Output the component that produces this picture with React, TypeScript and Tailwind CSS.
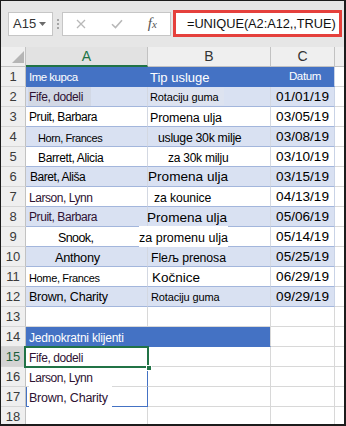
import React from "react";

const LINE = "border-b-[#a3b6dc]";

function RowHead({ n, sel }: { n: number; sel?: boolean }) {
  return (
    <div
      className={
        sel
          ? "w-[25px] shrink-0 h-full flex items-center justify-center border-r border-r-[#c2c2c2] border-b border-b-[#d6d6d6] bg-[#d3d3d3] text-[#1d5e3a] text-[13px] pt-[1px]"
          : "w-[25px] shrink-0 h-full flex items-center justify-center border-r border-r-[#c2c2c2] border-b border-b-[#d6d6d6] bg-[#efefef] text-[#3a3a3a] text-[13px] pt-[1px]"
      }
    >
      {n}
    </div>
  );
}

type T = { t: string; cls: string };

function TRow({
  n,
  band,
  head,
  a,
  b,
  c,
}: {
  n: number;
  band?: boolean;
  head?: boolean;
  a: T;
  b: T;
  c: T;
}) {
  const bg = head ? "bg-[#4472c4]" : band ? "bg-[#d9e1f2]" : "bg-white";
  const line = head ? "border-b-[#4472c4]" : LINE;
  const vr = head ? "border-r-[#4472c4]" : "border-r-[#d3d8e2]";
  return (
    <div className="flex h-[20px]">
      <RowHead n={n} />
      <div className={`w-[122px] shrink-0 ${bg} border-b ${line} border-r ${vr} flex items-center whitespace-nowrap`}>
        <span className={a.cls}>{a.t}</span>
      </div>
      <div className={`w-[123px] shrink-0 ${bg} border-b ${line} border-r ${vr} flex items-center whitespace-nowrap`}>
        <span className={b.cls}>{b.t}</span>
      </div>
      <div className={`w-[64px] shrink-0 ${bg} border-b ${line} border-r border-r-[#c9d3e6] flex items-center justify-end whitespace-nowrap`}>
        <span className={c.cls}>{c.t}</span>
      </div>
      <div className="flex-1 bg-white border-b border-b-[#d8d8d8]" />
    </div>
  );
}

const D = "text-[13.6px] text-black mr-[5px] pt-[1px]";
const P = "text-[#2e1232]";

export default function App() {
  return (
    <div className="w-[346px] h-[426px] overflow-hidden border-t border-l border-r-2 border-b-2 border-[#1c1c1c] bg-white font-['Liberation_Sans',Arial,sans-serif] leading-normal">
      {/* toolbar */}
      <div className="h-[46px] bg-[#e6e6e6] flex items-center pl-[7px] pb-[1px]">
        <div className="w-[45px] h-[24px] bg-white border border-[#c6c6c6] flex items-center justify-between pl-[4px] pr-[6px]">
          <span className="text-[13px] text-[#333]">A15</span>
          <svg width="7" height="4" viewBox="0 0 7 4">
            <polygon points="0,0 7,0 3.5,4" fill="#6b6b6b" />
          </svg>
        </div>
        <div className="w-[9px] flex flex-col items-center gap-[2px]">
          <div className="w-[2px] h-[2px] bg-[#a5a5a5]" />
          <div className="w-[2px] h-[2px] bg-[#a5a5a5]" />
          <div className="w-[2px] h-[2px] bg-[#a5a5a5]" />
        </div>
        <div className="w-[109px] h-[24px] bg-white border border-[#c6c6c6] flex items-center">
          <div className="w-[36px] flex justify-center">
            <svg width="10" height="10" viewBox="0 0 10 10">
              <path d="M1 1 L9 9 M9 1 L1 9" stroke="#b8b8b8" strokeWidth="1.3" fill="none" />
            </svg>
          </div>
          <div className="w-[37px] flex justify-center">
            <svg width="12" height="10" viewBox="0 0 12 10">
              <path d="M1 5.2 L4.5 8.6 L11 1.2" stroke="#b8b8b8" strokeWidth="1.6" fill="none" />
            </svg>
          </div>
          <div className="w-[36px] flex justify-center">
            <span className="italic font-['Liberation_Serif',serif] text-[15px] text-[#555] leading-none">
              f<span className="text-[11px]">x</span>
            </span>
          </div>
        </div>
        <div className="ml-[2px] w-[169px] h-[27px] bg-white border-[3px] border-[#e5403c] flex items-center pl-[11px]">
          <span className="text-[12.8px] text-[#111] tracking-[-0.05px]">=UNIQUE(A2:A12,,TRUE)</span>
        </div>
      </div>

      {/* column header */}
      <div className="flex h-[20px]">
        <div className="w-[25px] shrink-0 bg-[#efefef] border-r border-b border-[#c2c2c2] flex items-end justify-end pr-[1px] pb-[3px]">
          <svg width="12" height="12" viewBox="0 0 12 12">
            <polygon points="12,0 12,12 0,12" fill="#b5b5b5" />
          </svg>
        </div>
        <div className="w-[122px] shrink-0 bg-[#e2e2e2] border-r border-r-[#c2c2c2] border-b-2 border-b-[#217346] flex items-center justify-center text-[14px] text-[#217346] pt-[1px]">
          A
        </div>
        <div className="w-[123px] shrink-0 bg-[#efefef] border-r border-b border-[#c2c2c2] flex items-center justify-center text-[14px] text-[#333]">
          B
        </div>
        <div className="w-[64px] shrink-0 bg-[#efefef] border-r border-b border-[#c2c2c2] flex items-center justify-center text-[14px] text-[#333]">
          C
        </div>
        <div className="flex-1 bg-[#efefef] border-b border-[#c2c2c2]" />
      </div>

      <TRow
        n={1}
        head
        a={{ t: "Ime kupca", cls: "text-[11.5px] tracking-[-0.5px] text-white ml-[3px] pt-[2px]" }}
        b={{ t: "Tip usluge", cls: "text-[13px] text-white ml-[2px] pt-[2px]" }}
        c={{ t: "Datum", cls: "text-[11.5px] tracking-[-0.35px] text-white mr-[13px] pt-[1px]" }}
      />
      <TRow
        n={2}
        band
        a={{ t: "Fife, dodeli", cls: `text-[12px] tracking-[-0.4px] ${P} ml-[2px] pl-[1px] pr-[8px] bg-[#d2d8e5] pt-[1px]` }}
        b={{ t: "Rotaciju guma", cls: "text-[11px] tracking-[-0.15px] text-black ml-[2px] pr-[6px] bg-[#dde3f0] pt-[1px]" }}
        c={{ t: "01/01/19", cls: D }}
      />
      <TRow
        n={3}
        a={{ t: "Pruit, Barbara", cls: "text-[12px] tracking-[-0.43px] text-black ml-[3px] pt-[1px]" }}
        b={{ t: "Promena ulja", cls: "text-[12.5px] tracking-[-0.15px] text-black ml-[2px] pt-[4px]" }}
        c={{ t: "03/05/19", cls: D }}
      />
      <TRow
        n={4}
        band
        a={{ t: "Horn, Frances", cls: "text-[11px] tracking-[-0.42px] text-black ml-[12px] pt-[3px]" }}
        b={{ t: "usluge 30k milje", cls: "text-[12.3px] text-black ml-[10px] pt-[3px] tracking-[-0.3px]" }}
        c={{ t: "03/08/19", cls: D }}
      />
      <TRow
        n={5}
        a={{ t: "Barrett, Alicia", cls: "text-[12px] tracking-[-0.36px] text-black ml-[12px] pt-[3px]" }}
        b={{ t: "za 30k milju", cls: "text-[12px] text-black ml-[20px] pt-[3px] tracking-[-0.25px]" }}
        c={{ t: "03/10/19", cls: D }}
      />
      <TRow
        n={6}
        band
        a={{ t: "Baret, Ališa", cls: "text-[12px] tracking-[-0.45px] text-black ml-[4px] pt-[1px]" }}
        b={{ t: "Promena ulja", cls: "text-[13.6px] text-black ml-[0px] pt-[2px]" }}
        c={{ t: "03/15/19", cls: D }}
      />
      <TRow
        n={7}
        a={{ t: "Larson, Lynn", cls: `text-[12px] tracking-[-0.45px] ${P} ml-[3px] pt-[2px]` }}
        b={{ t: "za kounice", cls: "text-[12.2px] tracking-[-0.1px] text-black ml-[6px] pt-[4px]" }}
        c={{ t: "04/13/19", cls: D }}
      />
      <TRow
        n={8}
        band
        a={{ t: "Pruit, Barbara", cls: `text-[12px] tracking-[-0.43px] ${P} ml-[3px] pt-[1px]` }}
        b={{ t: "Promena ulja", cls: "text-[13.6px] text-black ml-[-1px] pt-[3px]" }}
        c={{ t: "05/06/19", cls: D }}
      />
      <TRow
        n={9}
        a={{ t: "Snook,", cls: "text-[12.5px] tracking-[-0.6px] text-black ml-[32px] pt-[3px]" }}
        b={{ t: "za promenu ulja", cls: "text-[12.5px] text-black ml-[-9px] pt-[3px] bg-white" }}
        c={{ t: "05/14/19", cls: D }}
      />
      <TRow
        n={10}
        band
        a={{ t: "Anthony", cls: "text-[12.8px] tracking-[-0.3px] text-black ml-[29px] pt-[3px]" }}
        b={{ t: "Fleљ prenosa", cls: "text-[12.3px] tracking-[-0.1px] text-black ml-[3px] pt-[4px]" }}
        c={{ t: "05/25/19", cls: D }}
      />
      <TRow
        n={11}
        a={{ t: "Home, Frances", cls: "text-[11px] tracking-[-0.35px] text-black ml-[3px] pt-[3px]" }}
        b={{ t: "Kočnice", cls: "text-[13.5px] text-black ml-[4px] pt-[3px]" }}
        c={{ t: "06/29/19", cls: D }}
      />
      <TRow
        n={12}
        band
        a={{ t: "Brown, Charity", cls: "text-[12.5px] tracking-[-0.22px] text-black ml-[3px] pt-[2px]" }}
        b={{ t: "Rotaciju guma", cls: "text-[11px] tracking-[-0.15px] text-black ml-[3px] pt-[2px]" }}
        c={{ t: "09/29/19", cls: D }}
      />

      {/* row 13 */}
      <div className="flex h-[20px]">
        <RowHead n={13} />
        <div className="w-[122px] shrink-0 border-r border-b border-[#d8d8d8]" />
        <div className="w-[123px] shrink-0 border-r border-b border-[#d8d8d8]" />
        <div className="w-[64px] shrink-0 border-r border-b border-[#d8d8d8]" />
        <div className="flex-1 border-b border-[#d8d8d8]" />
      </div>
      {/* row 14 */}
      <div className="flex h-[20px]">
        <RowHead n={14} />
        <div className="w-[245px] shrink-0 bg-[#4472c4] border-b border-b-[#4472c4] border-r border-r-[#d8d8d8] flex items-center whitespace-nowrap">
          <span className="text-[12px] tracking-[-0.2px] text-white ml-[3px] pt-[2px]">Jednokratni klijenti</span>
        </div>
        <div className="w-[64px] shrink-0 border-r border-b border-[#d8d8d8]" />
        <div className="flex-1 border-b border-[#d8d8d8]" />
      </div>
      {/* row 15 */}
      <div className="flex h-[20px]">
        <RowHead n={15} sel />
        <div className="w-[122px] shrink-0 relative flex items-center whitespace-nowrap">
          <span className={`text-[12px] tracking-[-0.4px] ${P} ml-[3px] pt-[2px]`}>Fife, dodeli</span>
          <div className="absolute left-[-2px] top-[-1px] right-[-1px] bottom-[-1px] border-2 border-[#217346]" />
          <div className="absolute right-[-4px] bottom-[-4px] w-[6px] h-[6px] bg-[#217346] border border-white" />
        </div>
        <div className="w-[123px] shrink-0 border-r border-b border-[#d8d8d8]" />
        <div className="w-[64px] shrink-0 border-r border-b border-[#d8d8d8]" />
        <div className="flex-1 border-b border-[#d8d8d8]" />
      </div>
      {/* row 16 */}
      <div className="flex h-[20px]">
        <RowHead n={16} />
        <div className="w-[122px] shrink-0 border-r border-r-[#4472c4] border-b border-b-[#d8d8d8] flex items-center whitespace-nowrap">
          <span className={`text-[12px] tracking-[-0.45px] ${P} ml-[3px] pt-[3px] pr-[12px] bg-white`}>Larson, Lynn</span>
        </div>
        <div className="w-[123px] shrink-0 border-r border-b border-[#d8d8d8]" />
        <div className="w-[64px] shrink-0 border-r border-b border-[#d8d8d8]" />
        <div className="flex-1 border-b border-[#d8d8d8]" />
      </div>
      {/* row 17 */}
      <div className="flex h-[20px]">
        <RowHead n={17} />
        <div className="w-[122px] shrink-0 border-l border-l-[#4472c4] border-r border-r-[#4472c4] border-b border-b-[#4472c4] flex items-center whitespace-nowrap">
          <span className={`text-[12.5px] tracking-[-0.22px] ${P} ml-[2px] pt-[3px] pr-[4px] bg-white`}>Brown, Charity</span>
        </div>
        <div className="w-[123px] shrink-0 border-r border-b border-[#d8d8d8]" />
        <div className="w-[64px] shrink-0 border-r border-b border-[#d8d8d8]" />
        <div className="flex-1 border-b border-[#d8d8d8]" />
      </div>
      {/* row 18 */}
      <div className="flex h-[20px]">
        <RowHead n={18} />
        <div className="w-[122px] shrink-0 border-r border-b border-[#d8d8d8]" />
        <div className="w-[123px] shrink-0 border-r border-b border-[#d8d8d8]" />
        <div className="w-[64px] shrink-0 border-r border-b border-[#d8d8d8]" />
        <div className="flex-1 border-b border-[#d8d8d8]" />
      </div>
    </div>
  );
}
